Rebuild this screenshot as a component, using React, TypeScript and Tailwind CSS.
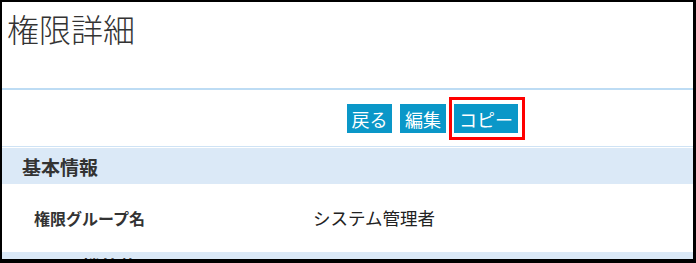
import { FC } from 'react';

// ~ ~ ~ ~ ~ ~ ~ ~ ~ ~ ~ ~ ~ ~ ~ ~ ~ ~ ~ ~ ~ ~ Parts

const jp = { fontFamily: '"Noto Sans CJK JP", "Noto Sans", sans-serif' };

const Btn: FC<{ label: string; w: string }> = ({ label, w }) => (
  <button className={`h-[29px] ${w} bg-[#0a97c8] text-white text-[18px] leading-none flex items-center justify-center`}>
    {label}
  </button>
);

// ~ ~ ~ ~ ~ ~ ~ ~ ~ ~ ~ ~ ~ ~ ~ ~ ~ ~ ~ ~ ~ ~ Page

export const App: FC = () => {
  return (
    <div
      className="w-[696px] h-[263px] overflow-hidden bg-black pt-[2px] pl-[2px] pr-[3px] pb-[4px]"
      style={jp}
    >
      <div className="h-full bg-white overflow-hidden flex flex-col">

        <header className="h-[86px] shrink-0 pl-[5px] pt-[6px]">
          <h1 className="text-[32px] font-light leading-[40px] text-[#333]">権限詳細</h1>
        </header>
        <div className="h-[2px] shrink-0 bg-[#bddcf4]" />

        <div className="h-[57px] shrink-0 flex items-start pl-[345px] pt-[14px] border-b border-[#cfe3f5]">
          <Btn label="戻る" w="w-[45px]" />
          <div className="ml-[8px]">
            <Btn label="編集" w="w-[46px]" />
          </div>
          <div className="ml-[3px] -mt-[7px] border-[3px] border-[#ff0000] pt-[4px] pb-[4px] pl-[2px] pr-[4px]">
            <Btn label="コピー" w="w-[64px]" />
          </div>
        </div>

        <section className="mt-[1px] h-[36px] shrink-0 bg-[#dbe9f7] flex items-center pl-[20px]">
          <h2 className="text-[19px] font-bold text-[#333] leading-none">基本情報</h2>
        </section>

        <div className="h-[68px] shrink-0 flex items-center">
          <div className="w-[311px] pl-[32px] text-[16px] font-semibold text-[#333]">権限グループ名</div>
          <div className="text-[17.5px] text-[#222]">システム管理者</div>
        </div>

        <section className="h-[36px] shrink-0 bg-[#dbe9f7] flex items-start pl-[80px] pt-[5px]">
          <h2 className="text-[19px] font-bold text-[#333] leading-none">機能権限</h2>
        </section>

      </div>
    </div>
  );
};

// ~ ~ ~ ~ ~ ~ ~ ~ ~ ~ ~ ~ ~ ~ ~ ~ ~ ~ ~ ~ ~ ~ Export

export default App;
